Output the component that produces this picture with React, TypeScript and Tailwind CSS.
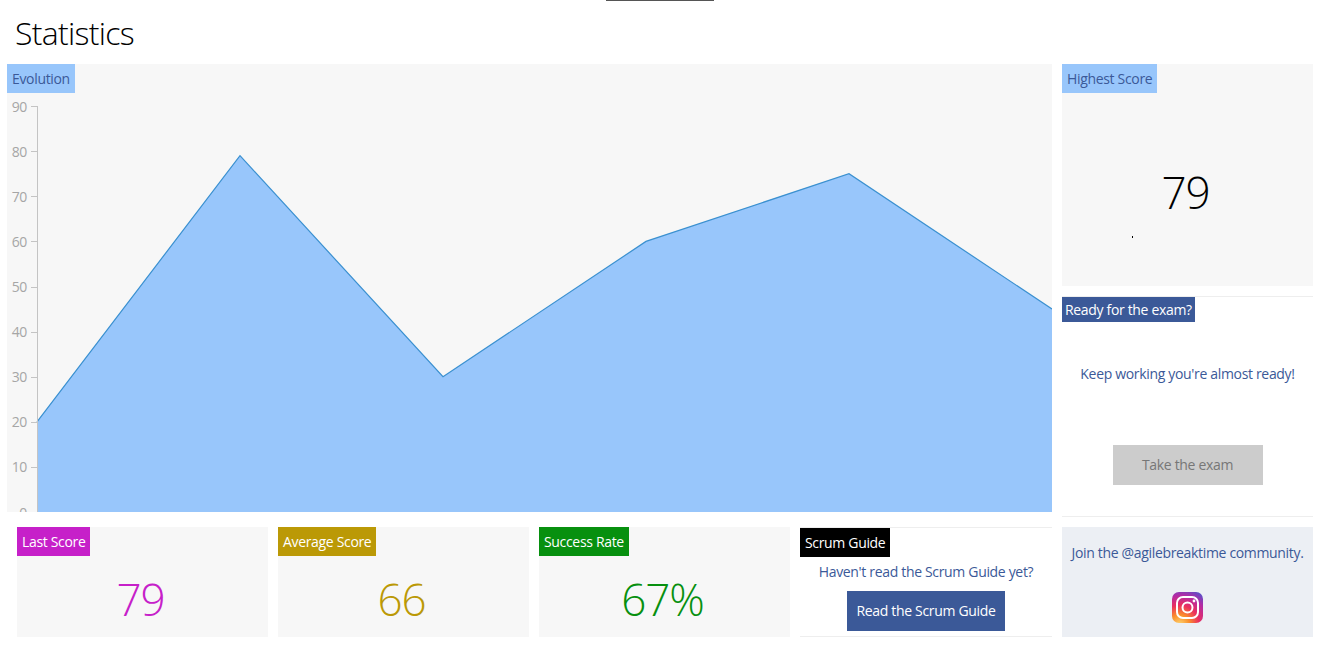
const font = "font-['Open_Sans','Noto_Sans',sans-serif]";

const yTicks = [0, 10, 20, 30, 40, 50, 60, 70, 80, 90];
const points: [number, number][] = [
  [30, 20],
  [233, 79],
  [436, 30],
  [639, 60],
  [842, 75],
  [1045, 45],
];

// chart height is 448, zero line sits right on the clipped bottom edge
const toY = (v: number) => 448 - v * 4.51;

function EvolutionChart() {
  const line = points.map(([x, v]) => `${x},${toY(v)}`).join(" ");
  return (
    <svg width="1045" height="448" className="absolute left-0 top-0 block">
      <polygon points={`30,448 ${line} 1045,448`} fill="#98c6fb" />
      <polyline points={line} fill="none" stroke="#3a90d0" strokeWidth="1.2" />
      <line x1="30.5" y1="42" x2="30.5" y2="448" stroke="#c4c4c4" />
      {yTicks.map((t) => (
        <g key={t}>
          <line x1="24" x2="30" y1={Math.round(toY(t)) + 0.5} y2={Math.round(toY(t)) + 0.5} stroke="#c4c4c4" />
          <text x="20" y={toY(t) + 5.5} textAnchor="end" fontSize="14" fill="#a6a6a6">
            {t}
          </text>
        </g>
      ))}
    </svg>
  );
}

function StatCard({ label, value, bg, text }: { label: string; value: string; bg: string; text: string }) {
  return (
    <div className="flex h-[110px] w-[251px] flex-col items-start bg-[#f7f7f7]">
      <div className={`flex h-[29px] items-center px-[5px] text-[14px] text-white ${bg}`}>{label}</div>
      <div
        className={`mt-[12px] w-full pr-[4px] text-center text-[44px] leading-[62px] font-light tracking-[-1px] ${text}`}
      >
        {value}
      </div>
    </div>
  );
}

function InstagramLogo() {
  return (
    <svg width="31" height="31" viewBox="0 0 31 31" className="block">
      <defs>
        <radialGradient id="ig" cx="25%" cy="105%" r="125%">
          <stop offset="0%" stopColor="#fdd56f" />
          <stop offset="25%" stopColor="#fb8f2c" />
          <stop offset="50%" stopColor="#ea2f5e" />
          <stop offset="75%" stopColor="#b42aa4" />
          <stop offset="100%" stopColor="#4b55cf" />
        </radialGradient>
      </defs>
      <rect width="31" height="31" rx="7" fill="url(#ig)" />
      <rect x="5" y="5" width="21" height="21" rx="6" fill="none" stroke="#fff" strokeWidth="2" />
      <circle cx="15.5" cy="15.5" r="5" fill="none" stroke="#fff" strokeWidth="2" />
      <circle cx="22" cy="9" r="1.4" fill="#fff" />
    </svg>
  );
}

export default function App() {
  return (
    <div className={`h-[645px] w-[1321px] overflow-hidden bg-white tracking-[-0.33px] ${font}`}>
      <div className="ml-[606px] h-px w-[108px] bg-[#555555]" />
      <h1 className="h-[63px] pl-[15px] pt-[9px] text-[32px] leading-[45px] font-light tracking-[-0.7px] text-black">
        Statistics
      </h1>

      <div className="flex gap-[10px] pl-[7px]">
        <div className="w-[1045px]">
          <div className="relative h-[448px] overflow-hidden bg-[#f7f7f7]">
            <EvolutionChart />
            <div className="absolute left-0 top-0 flex h-[29px] items-center bg-[#98c6fb] px-[5px] text-[14px] text-[#3b5998]">
              Evolution
            </div>
          </div>

          <div className="mt-[15px] flex gap-[10px] pl-[10px]">
            <StatCard label="Last Score" value="79" bg="bg-[#c620c9]" text="text-[#c620c9]" />
            <StatCard label="Average Score" value="66" bg="bg-[#bb9906]" text="text-[#bb9906]" />
            <StatCard label="Success Rate" value="67%" bg="bg-[#07900f]" text="text-[#07900f]" />
            <div className="flex h-[110px] w-[252px] flex-col items-center border-y border-[#eeeeee]">
              <div className="flex h-[29px] items-center self-start bg-black px-[5px] text-[14px] text-white">
                Scrum Guide
              </div>
              <p className="mt-[5px] text-[14px] leading-[20px] text-[#3b5998]">Haven't read the Scrum Guide yet?</p>
              <button className="mt-[9px] h-[40px] w-[158px] bg-[#3b5998] pb-[1px] text-[14px] text-white">
                Read the Scrum Guide
              </button>
            </div>
          </div>
        </div>

        <div className="flex w-[251px] flex-col">
          <div className="relative h-[222px] bg-[#f7f7f7]">
            <div className="absolute left-0 top-0 flex h-[29px] items-center bg-[#98c6fb] px-[5px] text-[14px] text-[#3b5998]">
              Highest Score
            </div>
            <div className="pr-[4px] pt-[95px] text-center text-[44px] leading-[66px] font-light tracking-[-1px] text-black">
              79
            </div>
            <div className="absolute left-[70px] top-[172px] h-[2px] w-px bg-black" />
          </div>

          <div className="mt-[10px] flex h-[221px] flex-col items-center border-y border-[#eeeeee]">
            <div className="flex h-[25px] items-center self-start bg-[#3b5998] px-[3px] text-[14px] text-white">
              Ready for the exam?
            </div>
            <p className="mt-[42px] text-[14px] leading-[20px] text-[#3b5998]">Keep working you're almost ready!</p>
            <button className="mt-[61px] h-[40px] w-[150px] bg-[#cccccc] pb-[1px] text-[14px] text-[#777777]">
              Take the exam
            </button>
          </div>

          <div className="mt-[10px] flex h-[110px] flex-col items-center bg-[#eceff4]">
            <p className="mt-[16px] text-[14px] leading-[20px] text-[#3b5998]">Join the @agilebreaktime community.</p>
            <div className="mt-[29px]">
              <InstagramLogo />
            </div>
          </div>
        </div>
      </div>
    </div>
  );
}
